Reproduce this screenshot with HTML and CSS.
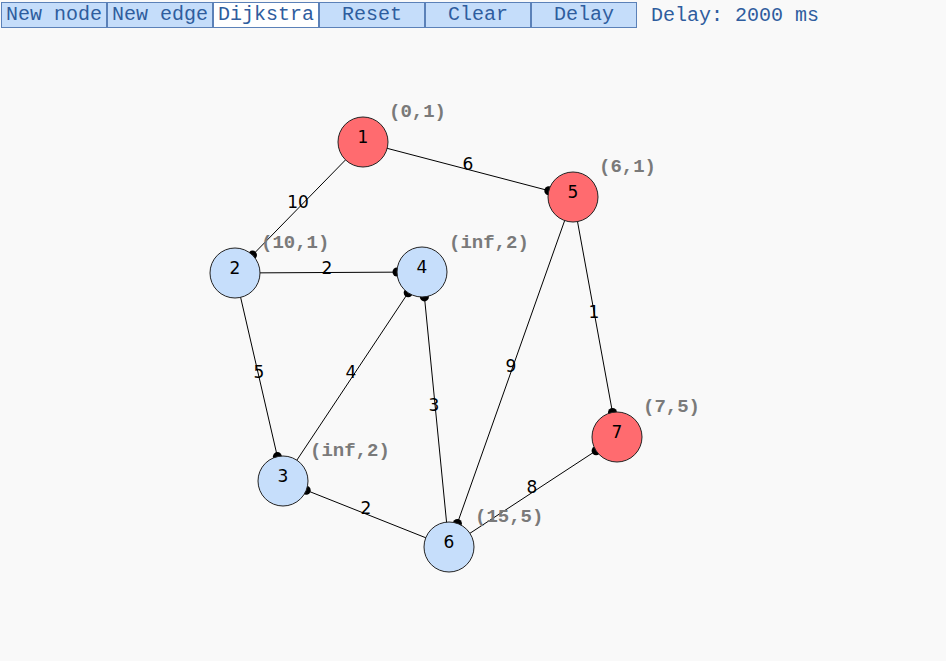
FILE: index.html
```html
<!DOCTYPE html>
<html lang="en">
<head>
  <meta charset="utf-8">
  <title>Dijkstra</title>
  <link rel="stylesheet" href="styles.css">
</head>
<body>
  <div class="toolbar">
    <button class="btn">New node</button>
    <button class="btn">New edge</button>
    <button class="btn active">Dijkstra</button>
    <button class="btn">Reset</button>
    <button class="btn">Clear</button>
    <button class="btn">Delay</button>
    <span class="delay">Delay: 2000 ms</span>
  </div>
  <svg class="canvas" viewBox="0 30 946 631" width="946" height="631">
    <g class="edges">
      <line x1="363" y1="142" x2="573" y2="197"/>
      <line x1="363" y1="142" x2="235" y2="273"/>
      <line x1="235" y1="273" x2="422" y2="272"/>
      <line x1="235" y1="273" x2="283" y2="481"/>
      <line x1="283" y1="481" x2="422" y2="272"/>
      <line x1="449" y1="547" x2="422" y2="272"/>
      <line x1="573" y1="197" x2="449" y2="547"/>
      <line x1="573" y1="197" x2="617" y2="437"/>
      <line x1="449" y1="547" x2="617" y2="437"/>
      <line x1="449" y1="547" x2="283" y2="481"/>
    </g>
    <g class="heads">
      <circle cx="548.8" cy="190.7" r="4.5"/>
      <circle cx="252.5" cy="255.1" r="4.5"/>
      <circle cx="397" cy="272" r="4.5"/>
      <circle cx="277.4" cy="456.6" r="4.5"/>
      <circle cx="408.2" cy="292.8" r="4.5"/>
      <circle cx="424.4" cy="296.9" r="4.5"/>
      <circle cx="457.4" cy="523.4" r="4.5"/>
      <circle cx="612.5" cy="412.4" r="4.5"/>
      <circle cx="596.1" cy="450.7" r="4.5"/>
      <circle cx="306.2" cy="490.2" r="4.5"/>
    </g>
    <g class="weights">
      <text x="468" y="164">6</text>
      <text x="298" y="202">10</text>
      <text x="327" y="268">2</text>
      <text x="259" y="372">5</text>
      <text x="351" y="372">4</text>
      <text x="434" y="405">3</text>
      <text x="511" y="366">9</text>
      <text x="594" y="312">1</text>
      <text x="532" y="487">8</text>
      <text x="366" y="508">2</text>
    </g>
    <g class="nodes">
      <circle class="done" cx="363" cy="142" r="25"/>
      <circle class="done" cx="573" cy="197" r="25"/>
      <circle class="done" cx="617" cy="437" r="25"/>
      <circle class="open" cx="235" cy="273" r="25"/>
      <circle class="open" cx="422" cy="272" r="25"/>
      <circle class="open" cx="283" cy="481" r="25"/>
      <circle class="open" cx="449" cy="547" r="25"/>
    </g>
    <g class="ids">
      <text x="363" y="137">1</text>
      <text x="573" y="192">5</text>
      <text x="617" y="432">7</text>
      <text x="235" y="268">2</text>
      <text x="422" y="267">4</text>
      <text x="283" y="476">3</text>
      <text x="449" y="542">6</text>
    </g>
    <g class="dist">
      <text x="389" y="112">(0,1)</text>
      <text x="599" y="167">(6,1)</text>
      <text x="643" y="407">(7,5)</text>
      <text x="261" y="243">(10,1)</text>
      <text x="449" y="243">(inf,2)</text>
      <text x="310" y="451">(inf,2)</text>
      <text x="475" y="517">(15,5)</text>
    </g>
  </svg>
</body>
</html>
```
FILE: styles.css
```css
*{
  margin: 0;
  padding: 0;
  box-sizing: border-box;
}

body{
  background: #f9f9f9;
  font-family: "Liberation Mono", monospace;
}

.toolbar{
  display: flex;
  align-items: center;
  height: 30px;
  padding: 2px 1px 2px 1px;
}

.btn{
  width: 106px;
  height: 26px;
  font-family: "Liberation Mono", monospace;
  font-size: 20px;
  line-height: 22px;
  color: #2f5d9e;
  background: #c5ddfa;
  border: 1px solid #5b81b8;
}

.btn.active{
  background: #ffffff;
}

.delay{
  margin-left: 14px;
  font-size: 20px;
  color: #2f5d9e;
}

.canvas{
  display: block;
}

.edges line{
  stroke: #000;
  stroke-width: 1;
}

.heads circle{
  fill: #000;
}

.weights text, .ids text{
  font-family: "DejaVu Sans", sans-serif;
  font-size: 17px;
  fill: #000;
  text-anchor: middle;
  dominant-baseline: central;
}

.nodes circle{
  stroke: #222;
  stroke-width: 1;
}

.nodes .done{
  fill: #ff6b6f;
}

.nodes .open{
  fill: #c6defb;
}

.dist text{
  font-family: "Liberation Mono", monospace;
  font-weight: bold;
  font-size: 19px;
  fill: #7a7a7a;
  dominant-baseline: central;
}
```
